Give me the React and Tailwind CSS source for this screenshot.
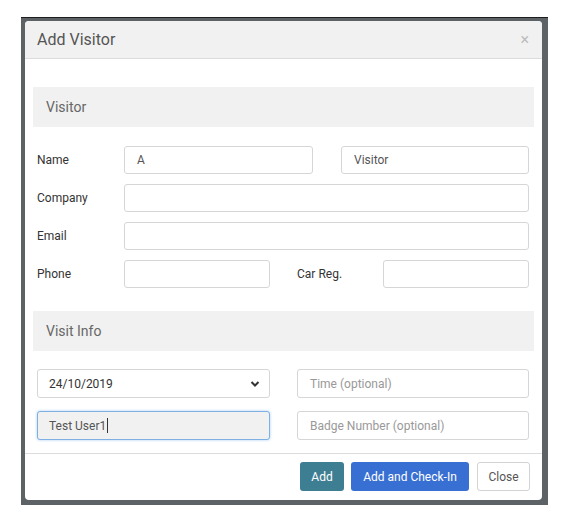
import { useState } from 'react'

function Field({ value, placeholder, className = '' }) {
  return (
    <div className={`h-[28px] border border-[#d6d6d6] rounded-[3px] bg-white px-[12px] flex items-center text-[12px] ${className}`}>
      {value ? (
        <span className="text-[#555]">{value}</span>
      ) : (
        <span className="text-[#999]">{placeholder}</span>
      )}
    </div>
  )
}

function SectionHead({ title }) {
  return (
    <div className="h-[40px] bg-[#f1f1f1] flex items-center pl-[13px] text-[14px] text-[#666]">
      {title}
    </div>
  )
}

function App() {
  const [who] = useState('Test User1')

  return (
    <div className="w-[566px] h-[528px] bg-white pt-[17px] pl-[21px]" style={{ fontFamily: 'Roboto, "Liberation Sans", sans-serif' }}>
      <div className="w-[527px] h-[488px] bg-[#5d6266] border-t border-[#1d1d1d] pt-[3px] pl-[4px]">
        <div className="w-[517px] h-[479px] bg-white rounded-[4px] overflow-hidden flex flex-col">
          {/* header */}
          <div className="h-[38px] bg-[#f1f1f1] border-b border-[#dcdcdc] flex items-center justify-between pl-[12px] pr-[13px]">
            <span className="text-[16px] text-[#555]">Add Visitor</span>
            <span className="text-[16px] text-[#bdbdbd]">×</span>
          </div>

          <div className="px-[8px] pt-[28px]">
            <SectionHead title="Visitor" />

            <div className="px-[4px] pt-[19px] flex flex-col gap-[10px] text-[12px] text-[#333]">
              <div className="flex items-center">
                <span className="w-[87px]">Name</span>
                <Field value="A" className="w-[189px]" />
                <Field value="Visitor" className="w-[188px] ml-[28px]" />
              </div>
              <div className="flex items-center">
                <span className="w-[87px]">Company</span>
                <Field className="w-[405px]" />
              </div>
              <div className="flex items-center">
                <span className="w-[87px]">Email</span>
                <Field className="w-[405px]" />
              </div>
              <div className="flex items-center">
                <span className="w-[87px]">Phone</span>
                <Field className="w-[146px]" />
                <span className="w-[86px] ml-[27px]">Car Reg.</span>
                <Field className="w-[146px]" />
              </div>
            </div>

            <div className="pt-[23px]">
              <SectionHead title="Visit Info" />
            </div>

            <div className="px-[4px] pt-[18px] grid grid-cols-[233px_232px] gap-x-[27px] gap-y-[13px] text-[12px]">
              <div className="h-[29px] border border-[#d6d6d6] rounded-[3px] bg-white pl-[11px] pr-[9px] flex items-center justify-between">
                <span className="text-[#333]">24/10/2019</span>
                <svg width="10" height="8" viewBox="0 0 10 8">
                  <path d="M1.5 2 L5 5.5 L8.5 2" fill="none" stroke="#333" strokeWidth="2" />
                </svg>
              </div>
              <Field placeholder="Time (optional)" className="h-[29px]" />
              <div className="h-[29px] border border-[#7fb0e4] rounded-[3px] bg-[#f1f1f1] px-[11px] flex items-center shadow-[0_0_3px_#a9cdf2]">
                <span className="text-[#555]">{who}</span>
                <span className="ml-[1px] h-[15px] border-l border-[#333]"></span>
              </div>
              <Field placeholder="Badge Number (optional)" className="h-[29px]" />
            </div>
          </div>

          {/* footer */}
          <div className="mt-[13px] border-t border-[#dcdcdc] flex justify-end items-center gap-[7px] pt-[8px] pr-[12px] text-[12px]">
            <button className="h-[29px] w-[44px] rounded-[3px] bg-[#3e7e93] text-white">Add</button>
            <button className="h-[29px] w-[118px] rounded-[3px] bg-[#386fd2] text-white">Add and Check-In</button>
            <button className="h-[29px] w-[53px] ml-[1px] rounded-[3px] bg-white border border-[#d3d3d3] text-[#555]">Close</button>
          </div>
        </div>
      </div>
    </div>
  )
}

export default App
